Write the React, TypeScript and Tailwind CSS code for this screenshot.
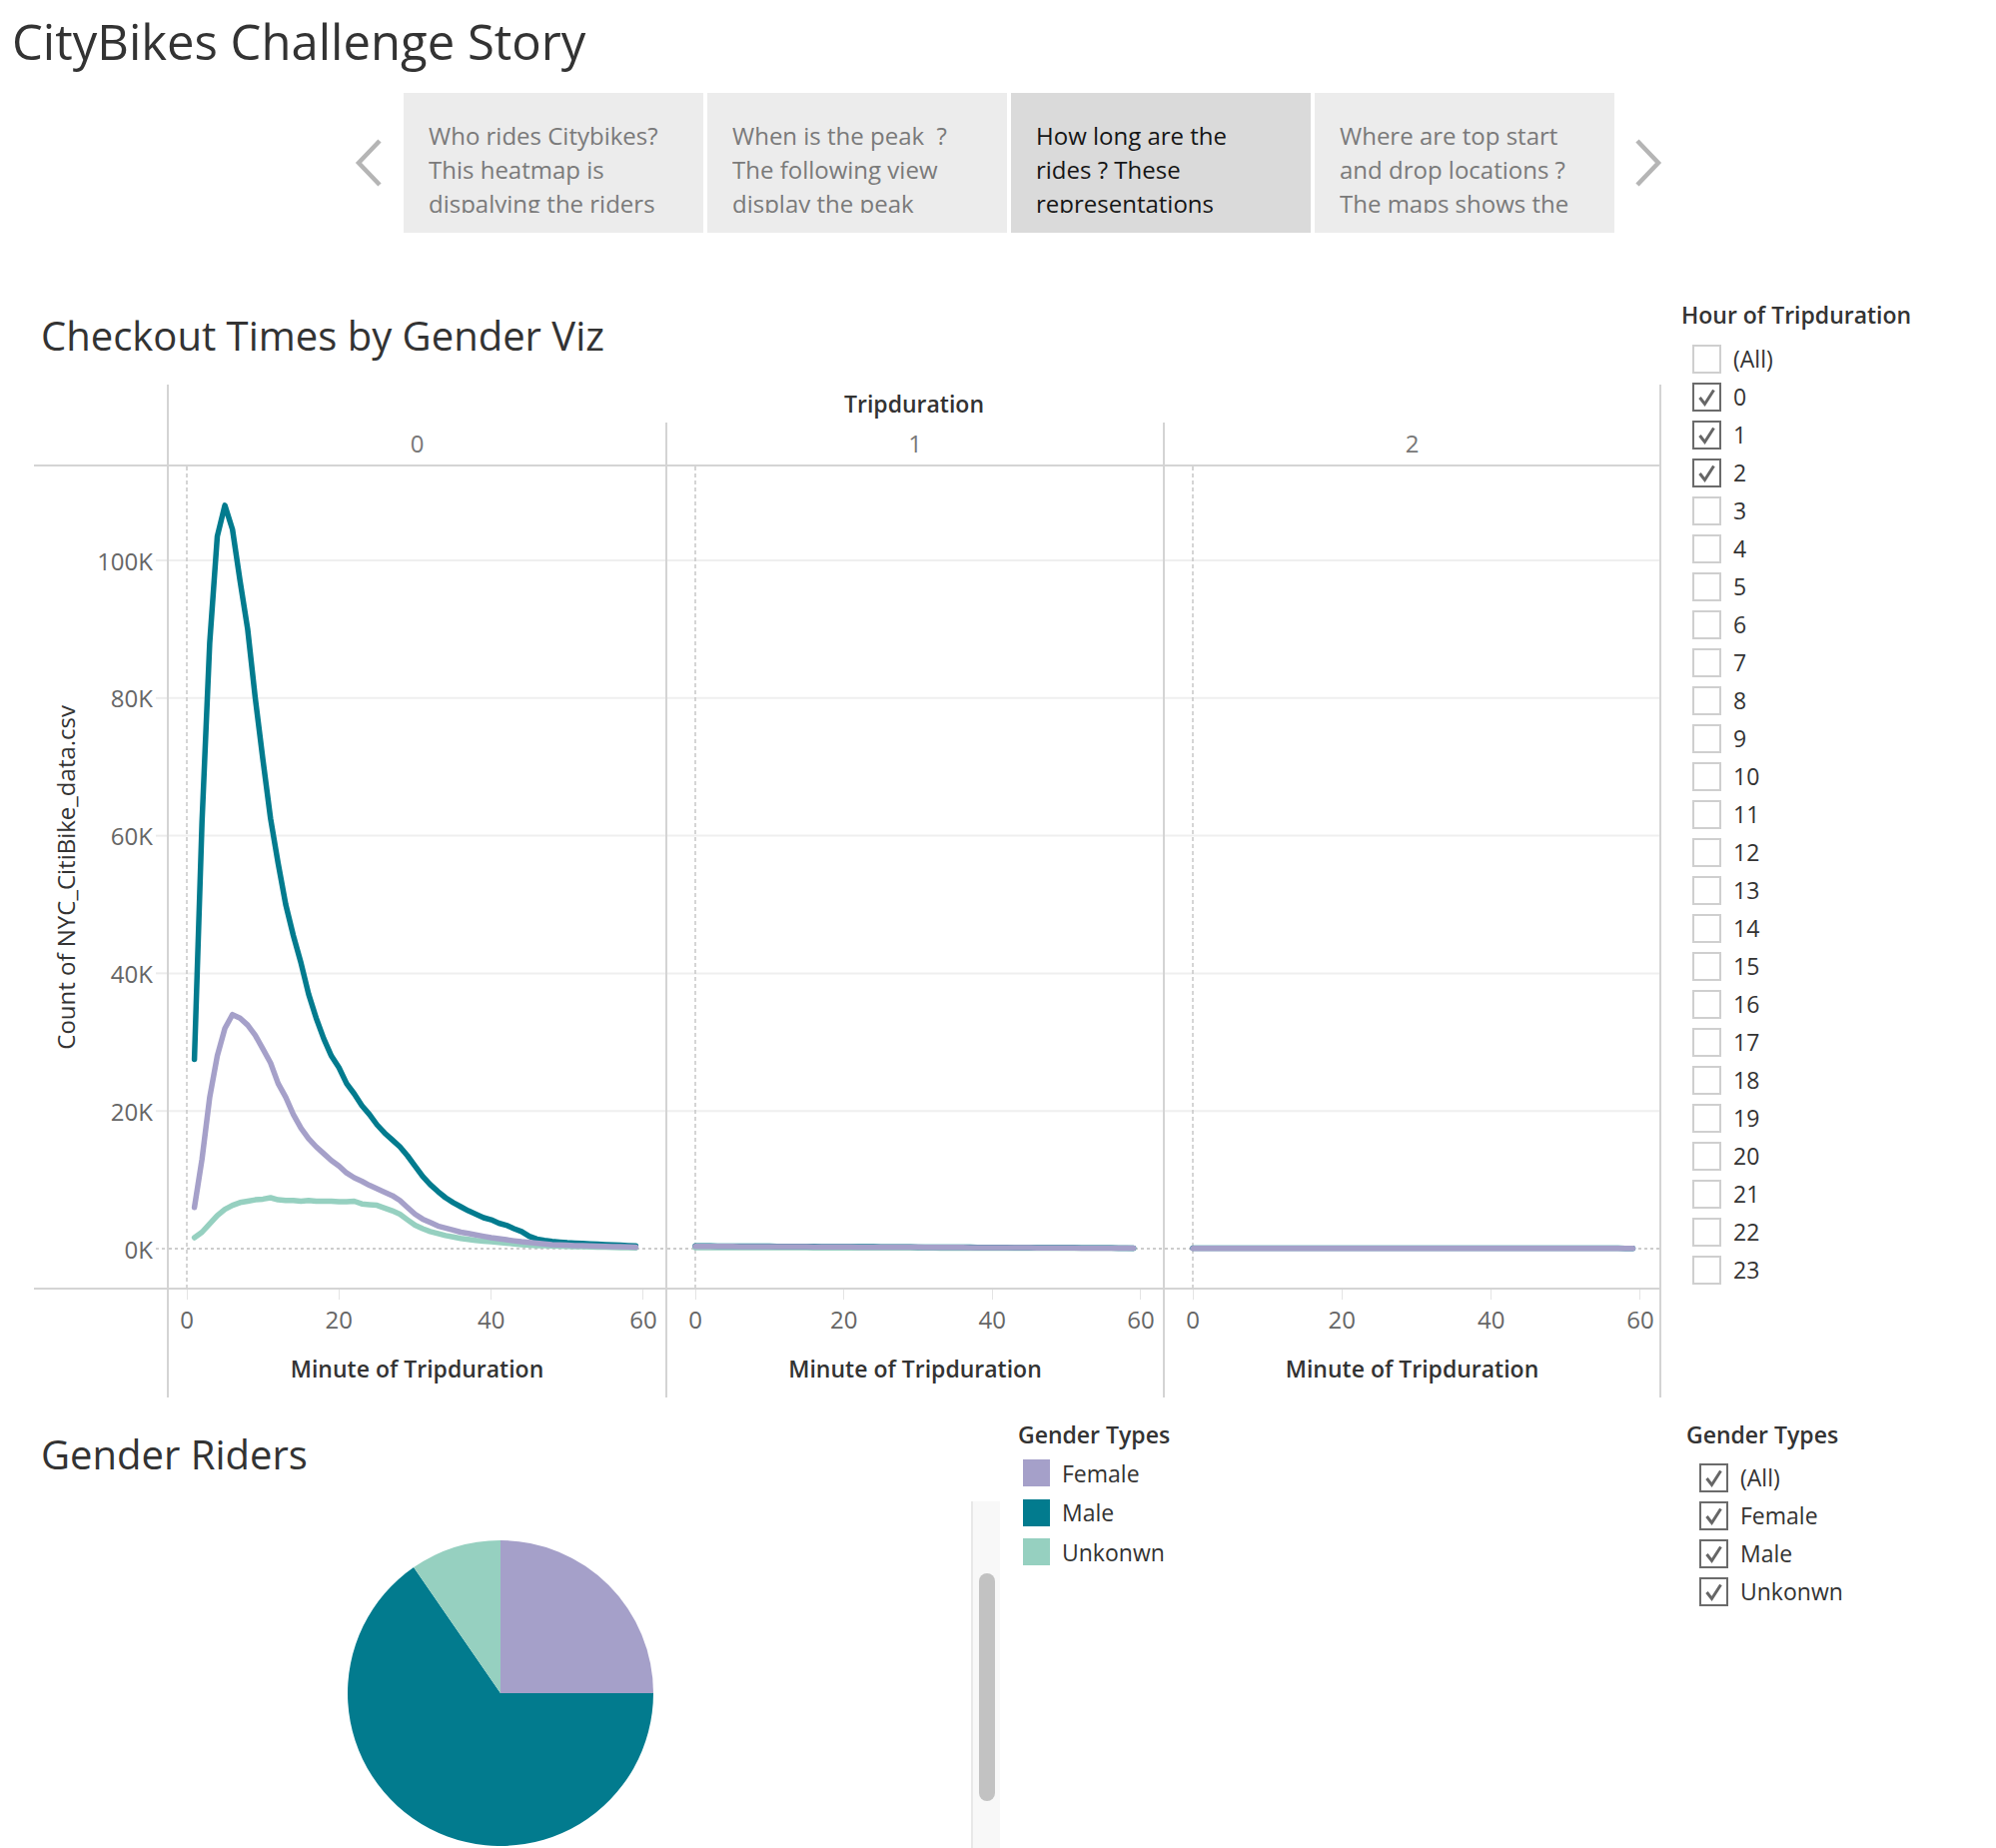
import React from 'react';

const BORDER = 'border-[#d4d4d4]';

const male = [27.5, 62, 88, 103.5, 108, 104.5, 97, 90, 80, 71, 62.5, 56, 50, 45.5, 41.5, 37, 33.5, 30.5, 28, 26.3, 24, 22.5, 20.8, 19.5, 18, 16.8, 15.8, 14.8, 13.5, 12, 10.5, 9.3, 8.3, 7.4, 6.7, 6.1, 5.5, 5, 4.5, 4.2, 3.7, 3.4, 2.9, 2.5, 1.8, 1.4, 1.2, 1.05, 0.95, 0.85, 0.8, 0.75, 0.7, 0.65, 0.6, 0.55, 0.5, 0.45, 0.4];
const female = [6, 13, 22, 28, 32, 34, 33.5, 32.5, 31, 29, 27, 24, 22, 19.5, 17.5, 16, 14.8, 13.8, 12.8, 12, 11, 10.3, 9.8, 9.2, 8.7, 8.2, 7.7, 7, 6, 5, 4.3, 3.8, 3.3, 3, 2.7, 2.4, 2.2, 2, 1.8, 1.6, 1.45, 1.3, 1.15, 1, 0.9, 0.8, 0.7, 0.6, 0.55, 0.5, 0.45, 0.42, 0.39, 0.36, 0.33, 0.3, 0.27, 0.24, 0.2];
const unknown = [1.6, 2.4, 3.6, 4.8, 5.7, 6.3, 6.7, 6.9, 7.1, 7.2, 7.4, 7.1, 7.0, 7.0, 6.9, 7.0, 6.9, 6.9, 6.9, 6.8, 6.8, 6.9, 6.5, 6.4, 6.3, 5.9, 5.5, 5.0, 4.2, 3.4, 2.9, 2.5, 2.2, 1.9, 1.7, 1.5, 1.35, 1.2, 1.1, 1.0, 0.9, 0.8, 0.7, 0.6, 0.5, 0.45, 0.42, 0.4, 0.37, 0.34, 0.31, 0.28, 0.25, 0.22, 0.2, 0.18, 0.16, 0.14, 0.12];

const COLORS = { female: '#a5a0c9', male: '#027b8e', unknown: '#96d0c0' };

type Series = { color: string; start: number; values: number[] };

const flat = (from: number, to: number) => Array.from({ length: 60 }, (_, i) => from + ((to - from) * i) / 59);

const panes: { label: string; w: number; x0: number; span: number; tickBox: string; last?: boolean; series: Series[] }[] = [
  {
    label: '0',
    w: 497,
    x0: 18,
    span: 457,
    tickBox: 'ml-[18px] w-[457px]',
    series: [
      { color: COLORS.unknown, start: 1, values: unknown },
      { color: COLORS.male, start: 1, values: male },
      { color: COLORS.female, start: 1, values: female },
    ],
  },
  {
    label: '1',
    w: 496,
    x0: 28,
    span: 446,
    tickBox: 'ml-[28px] w-[446px]',
    series: [
      { color: COLORS.unknown, start: 0, values: flat(0.15, 0.05) },
      { color: COLORS.male, start: 0, values: flat(0.4, 0.08) },
      { color: COLORS.female, start: 0, values: flat(0.34, 0.06) },
    ],
  },
  {
    label: '2',
    w: 495,
    x0: 28,
    span: 448,
    tickBox: 'ml-[28px] w-[448px]',
    last: true,
    series: [
      { color: COLORS.male, start: 0, values: flat(0.08, 0.05) },
      { color: COLORS.female, start: 0, values: flat(0.05, 0.04) },
    ],
  },
];

const PLOT_H = 822;
const yOf = (v: number) => 783 - v * 6.89;

function Chevron({ dir }: { dir: 'left' | 'right' }) {
  const pts = dir === 'left' ? '25,2 4,24 25,46' : '3,2 24,24 3,46';
  return (
    <svg width="28" height="48" viewBox="0 0 28 48" className="shrink-0">
      <polyline points={pts} fill="none" stroke="#b5b5b5" strokeWidth="4.5" />
    </svg>
  );
}

const stories = [
  { lines: ['Who rides Citybikes?', 'This heatmap is', 'dispalying the riders'], active: false },
  { lines: ['When is the peak  ?', 'The following view', 'display the peak'], active: false },
  { lines: ['How long are the', 'rides ? These', 'representations'], active: true },
  { lines: ['Where are top start', 'and drop locations ?', 'The maps shows the'], active: false },
];

function StoryNav() {
  return (
    <div className="mt-[22px] flex items-center pl-[355px]">
      <Chevron dir="left" />
      <div className="ml-[21px] flex gap-[4px]">
        {stories.map((s, i) => (
          <div
            key={i}
            className={`w-[300px] h-[140px] pl-[25px] pt-[26px] ${s.active ? 'bg-[#dadada] text-[#161616]' : 'bg-[#ececec] text-[#7a7a7a]'}`}
          >
            {/* the story caption is cut off at the bottom, as in the original */}
            <div className="h-[94px] overflow-hidden text-[24px] leading-[34px] whitespace-pre">
              {s.lines.map((l) => (
                <div key={l}>{l}</div>
              ))}
            </div>
          </div>
        ))}
      </div>
      <div className="ml-[20px]">
        <Chevron dir="right" />
      </div>
    </div>
  );
}

function YAxis() {
  const ticks = [100, 80, 60, 40, 20, 0];
  return (
    <div className="flex h-full">
      <div className="w-[64px] flex items-center justify-center">
        <div className="[writing-mode:vertical-rl] rotate-180 text-[24px] whitespace-nowrap text-[#333]">
          Count of NYC_CitiBike_data.csv
        </div>
      </div>
      <svg width="69" height={PLOT_H} className="block">
        {ticks.map((t) => (
          <g key={t}>
            <text x="55" y={yOf(t)} textAnchor="end" dominantBaseline="central" fontSize="24" fill="#666">
              {t}K
            </text>
            <line
              x1="58"
              x2="69"
              y1={yOf(t)}
              y2={yOf(t)}
              stroke={t === 0 ? '#c4c4c4' : '#ececec'}
              strokeWidth={t === 0 ? 1.5 : 2}
              strokeDasharray={t === 0 ? '3 3' : undefined}
            />
          </g>
        ))}
      </svg>
    </div>
  );
}

function PanePlot({ w, x0, span, series }: { w: number; x0: number; span: number; series: Series[] }) {
  const grid = [20, 40, 60, 80, 100];
  const xOf = (m: number) => x0 + (m * span) / 60;
  return (
    <svg width={w} height={PLOT_H} className="block">
      {grid.map((g) => (
        <line key={g} x1="0" x2={w} y1={yOf(g)} y2={yOf(g)} stroke="#efefef" strokeWidth="2" />
      ))}
      <line x1="0" x2={w} y1={yOf(0)} y2={yOf(0)} stroke="#bdbdbd" strokeWidth="1.5" strokeDasharray="3 3" />
      <line x1={x0} x2={x0} y1="0" y2={PLOT_H} stroke="#c8c8c8" strokeWidth="1.5" strokeDasharray="4 3" />
      {series.map((s, i) => (
        <polyline
          key={i}
          points={s.values.map((v, k) => `${xOf(s.start + k).toFixed(1)},${yOf(v).toFixed(1)}`).join(' ')}
          fill="none"
          stroke={s.color}
          strokeWidth="5.5"
          strokeLinejoin="round"
          strokeLinecap="round"
        />
      ))}
    </svg>
  );
}

function Chart() {
  return (
    <div className="mt-[24px] w-[1629px]">
      {/* column header */}
      <div className="grid grid-cols-[133px_1496px] h-[80px]">
        <div />
        <div className={`border-x-2 ${BORDER} flex flex-col`}>
          <div className="h-[38px] flex items-center justify-center text-[23px] font-semibold text-[#333]">Tripduration</div>
          <div className="flex-1 grid grid-cols-[497px_498px_497px]">
            {panes.map((p, i) => (
              <div
                key={p.label}
                className={`flex items-center justify-center text-[24px] text-[#777] ${i > 0 ? `border-l-2 ${BORDER}` : ''}`}
              >
                {p.label}
              </div>
            ))}
          </div>
        </div>
      </div>

      {/* plot */}
      <div className={`grid grid-cols-[133px_499px_498px_499px] h-[826px] border-y-2 ${BORDER}`}>
        <YAxis />
        {panes.map((p) => (
          <div key={p.label} className={`border-l-2 ${BORDER} ${p.last ? 'border-r-2' : ''}`}>
            <PanePlot w={p.w} x0={p.x0} span={p.span} series={p.series} />
          </div>
        ))}
      </div>

      {/* x axis */}
      <div className="grid grid-cols-[133px_499px_498px_499px] h-[108px]">
        <div />
        {panes.map((p) => (
          <div key={p.label} className={`border-l-2 ${BORDER} ${p.last ? 'border-r-2' : ''} flex flex-col`}>
            <div className={`${p.tickBox} flex justify-between`}>
              {['0', '20', '40', '60'].map((t) => (
                <div key={t} className="w-0 flex flex-col items-center">
                  <div className="w-px h-[10px] bg-[#e4e4e4]" />
                  <div className="mt-[6px] text-[24px] leading-[28px] text-[#666]">{t}</div>
                </div>
              ))}
            </div>
            <div className="mt-[20px] text-center text-[23px] leading-[30px] font-semibold text-[#333]">Minute of Tripduration</div>
          </div>
        ))}
      </div>
    </div>
  );
}

function Checkbox({ checked }: { checked: boolean }) {
  return (
    <div
      className={`w-[29px] h-[29px] shrink-0 border-2 flex items-center justify-center ${checked ? 'border-[#6b6b6b]' : 'border-[#cfcfcf]'}`}
    >
      {checked && (
        <svg width="25" height="25" viewBox="0 0 25 25">
          <polyline points="5.5,13 10.5,19.5 19.5,5.5" fill="none" stroke="#666" strokeWidth="3" />
        </svg>
      )}
    </div>
  );
}

function HourFilter() {
  const items = ['(All)', ...Array.from({ length: 24 }, (_, i) => String(i))];
  return (
    <div className="ml-[13px]">
      <div className="text-[23px] leading-[30px] font-semibold text-[#333]">Hour of Tripduration</div>
      <div className="mt-[10px] flex flex-col pl-[11px]">
        {items.map((it) => (
          <div key={it} className="h-[38px] flex items-center gap-[12px]">
            <Checkbox checked={it === '0' || it === '1' || it === '2'} />
            <span className="text-[23px] text-[#333]">{it}</span>
          </div>
        ))}
      </div>
    </div>
  );
}

function Pie() {
  return (
    <svg width="306" height="306" viewBox="0 0 306 306" className="block">
      <path d="M153 153 L153 0 A153 153 0 0 1 306 153 Z" fill={COLORS.female} />
      <path d="M153 153 L306 153 A153 153 0 1 1 66.1 27.1 Z" fill={COLORS.male} />
      <path d="M153 153 L66.1 27.1 A153 153 0 0 1 153 0 Z" fill={COLORS.unknown} />
    </svg>
  );
}

const legend = [
  { label: 'Female', swatch: 'bg-[#a5a0c9]' },
  { label: 'Male', swatch: 'bg-[#027b8e]' },
  { label: 'Unkonwn', swatch: 'bg-[#96d0c0]' },
];

function Bottom() {
  return (
    <div className="flex">
      <div className="w-[1001px]">
        <h2 className="mt-[32px] pl-[41px] text-[40px] leading-[50px] text-[#333]">Gender Riders</h2>
        <div className="mt-[22px] flex h-[347px]">
          <div className="w-[972px] pl-[348px] pt-[39px]">
            <Pie />
          </div>
          <div className="w-[29px] bg-[#f8f8f8] border-l-2 border-[#e8e8e8] pt-[72px] pl-[6px]">
            <div className="w-[16px] h-[228px] rounded-full bg-[#c2c2c2]" />
          </div>
        </div>
      </div>

      <div className="w-[687px] pl-[18px] mt-[22px]">
        <div className="text-[23px] leading-[30px] font-semibold text-[#333]">Gender Types</div>
        <div className="mt-[4px] pl-[5px]">
          {legend.map((l) => (
            <div key={l.label} className="h-[39.5px] flex items-center gap-[12px]">
              <span className={`w-[27px] h-[27px] ${l.swatch}`} />
              <span className="text-[23px] text-[#333]">{l.label}</span>
            </div>
          ))}
        </div>
      </div>

      <div className="mt-[22px]">
        <div className="text-[23px] leading-[30px] font-semibold text-[#333]">Gender Types</div>
        <div className="mt-[9px] pl-[13px]">
          {['(All)', 'Female', 'Male', 'Unkonwn'].map((l) => (
            <div key={l} className="h-[38px] flex items-center gap-[12px]">
              <Checkbox checked />
              <span className="text-[23px] text-[#333]">{l}</span>
            </div>
          ))}
        </div>
      </div>
    </div>
  );
}

export default function App() {
  return (
    <div className="w-[1998px] h-[1850px] overflow-hidden bg-white text-[#333] font-['Open_Sans',sans-serif]">
      <h1 className="pl-[12px] pt-[11px] text-[49px] leading-[60px] font-normal text-[#333]">CityBikes Challenge Story</h1>
      <StoryNav />
      <div className="mt-[67px] flex">
        <div className="w-[1670px] pl-[34px]">
          <h2 className="pl-[7px] mt-[11px] text-[40px] leading-[50px] text-[#333]">Checkout Times by Gender Viz</h2>
          <Chart />
        </div>
        <HourFilter />
      </div>
      <Bottom />
    </div>
  );
}
